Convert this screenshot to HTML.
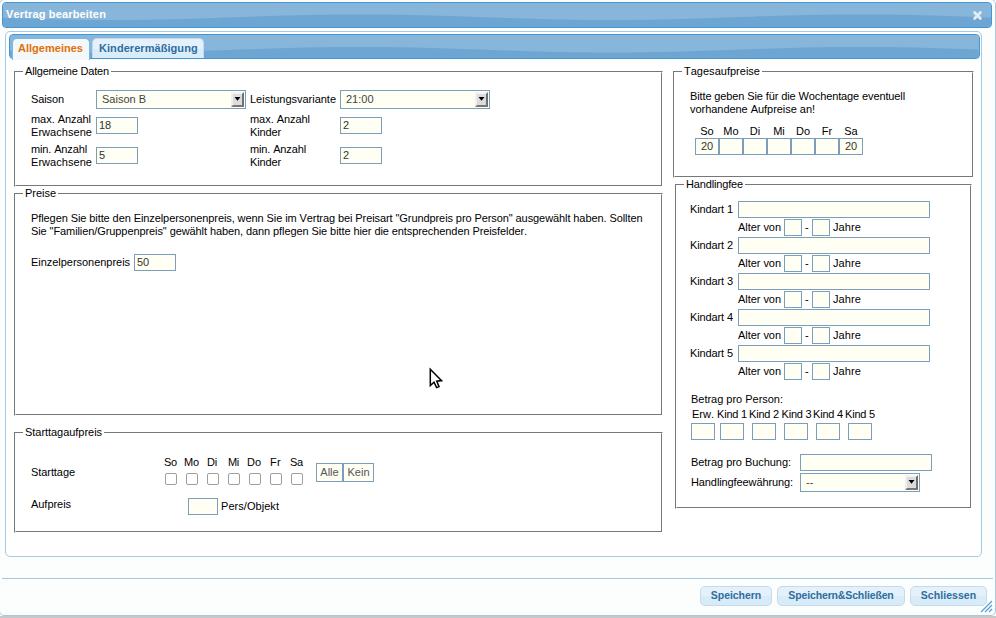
<!DOCTYPE html>
<html><head><meta charset="utf-8">
<style>
html,body{margin:0;padding:0;width:996px;height:618px;overflow:hidden;background:#fff;}
#root{position:relative;width:996px;height:618px;overflow:hidden;font-family:"Liberation Sans",sans-serif;font-size:11px;color:#222;font-kerning:none;}
.a{position:absolute;box-sizing:border-box;}
.t{position:absolute;white-space:nowrap;line-height:13px;font-size:11px;color:#000;}
.dlg{border:1px solid #a6c9e2;border-radius:5px;background:#fcfdfd;}
.hdr{border:1px solid #4297d7;border-radius:4px;background:linear-gradient(to bottom,#8ab8dd 0%,#86b4da 50%,#6fa7d4 62%,#6ca4d2 100%);}
.tabs{border:1px solid #a6c9e2;border-radius:5px;background:#fff;}
.fs{border:1px solid;border-color:#777 #fff #fff #777;}
.fsi{position:absolute;left:0;top:0;right:0;bottom:0;border:1px solid;border-color:#fff #777 #777 #fff;}
.inp{position:absolute;box-sizing:border-box;border:1px solid #7b9ebd;background:#fffff3;color:#333;font-size:11px;line-height:15px;padding-left:2px;white-space:nowrap;}
.inp.c{padding-left:0;text-align:center;}
.sel{position:absolute;box-sizing:border-box;border:1px solid #7b9ebd;background:#fffff3;color:#444;font-size:11px;line-height:17px;padding-left:5px;}
.arr{position:absolute;right:1px;top:1px;width:13px;height:15px;box-sizing:border-box;background:#dcdcdc;border-top:2px solid #f4f4f4;border-left:2px solid #f0f0f0;border-right:2px solid #707070;border-bottom:2px solid #787878;}
.cb{position:absolute;box-sizing:border-box;border:1px solid #a29f9a;border-radius:2px;background:#fff;}
.btn{position:absolute;box-sizing:border-box;border:1px solid #c5dbec;border-radius:5px;background:linear-gradient(to bottom,#e4f1fb 0%,#e4f1fb 50%,#d7ebf9 51%,#d7ebf9 100%);color:#2e6e9e;font-weight:bold;text-align:center;line-height:17px;}
.tab{position:absolute;box-sizing:border-box;border-top-left-radius:5px;border-top-right-radius:5px;}
.tab.act{border:1px solid #79b7e7;border-bottom:0;background:#f5f8f9;}
.tab.def{border:1px solid #c5dbec;border-bottom:0;background:linear-gradient(to bottom,#e4f1fb 0%,#e4f1fb 50%,#d9ecfa 51%,#d9ecfa 100%);}

</style></head>
<body><div id="root">
<div class="a dlg" style="left:-1px;top:-1px;width:997px;height:617px;"></div>
<div class="a hdr" style="left:2px;top:2px;width:990px;height:26px;overflow:hidden;"><svg style="position:absolute;left:0;top:0" width="988" height="24"><rect width="988" height="24" fill="#88b6db"/><path d="M0,24 L0,14.83 L4,14.96 L8,15.10 L12,15.23 L16,15.36 L20,15.49 L24,15.61 L28,15.73 L32,15.85 L36,15.96 L40,16.06 L44,16.17 L48,16.27 L52,16.36 L56,16.44 L60,16.53 L64,16.60 L68,16.67 L72,16.73 L76,16.79 L80,16.84 L84,16.88 L88,16.92 L92,16.95 L96,16.97 L100,16.99 L104,17.00 L108,17.00 L112,16.99 L116,16.98 L120,16.96 L124,16.94 L128,16.90 L132,16.86 L136,16.82 L140,16.76 L144,16.70 L148,16.64 L152,16.56 L156,16.49 L160,16.40 L164,16.31 L168,16.22 L172,16.12 L176,16.01 L180,15.90 L184,15.79 L188,15.67 L192,15.55 L196,15.42 L200,15.30 L204,15.17 L208,15.03 L212,14.90 L216,14.76 L220,14.62 L224,14.48 L228,14.34 L232,14.20 L236,14.06 L240,13.92 L244,13.78 L248,13.64 L252,13.50 L256,13.37 L260,13.23 L264,13.10 L268,12.98 L272,12.85 L276,12.73 L280,12.61 L284,12.50 L288,12.39 L292,12.28 L296,12.18 L300,12.09 L304,12.00 L308,11.91 L312,11.84 L316,11.76 L320,11.70 L324,11.64 L328,11.58 L332,11.54 L336,11.50 L340,11.46 L344,11.44 L348,11.42 L352,11.41 L356,11.40 L360,11.40 L364,11.41 L368,11.43 L372,11.45 L376,11.48 L380,11.52 L384,11.56 L388,11.61 L392,11.67 L396,11.73 L400,11.80 L404,11.87 L408,11.96 L412,12.04 L416,12.13 L420,12.23 L424,12.34 L428,12.44 L432,12.55 L436,12.67 L440,12.79 L444,12.91 L448,13.04 L452,13.17 L456,13.30 L460,13.44 L464,13.57 L468,13.71 L472,13.85 L476,13.99 L480,14.13 L484,14.27 L488,14.41 L492,14.55 L496,14.69 L500,14.83 L504,14.96 L508,15.10 L512,15.23 L516,15.36 L520,15.49 L524,15.61 L528,15.73 L532,15.85 L536,15.96 L540,16.06 L544,16.17 L548,16.27 L552,16.36 L556,16.44 L560,16.53 L564,16.60 L568,16.67 L572,16.73 L576,16.79 L580,16.84 L584,16.88 L588,16.92 L592,16.95 L596,16.97 L600,16.99 L604,17.00 L608,17.00 L612,16.99 L616,16.98 L620,16.96 L624,16.94 L628,16.90 L632,16.86 L636,16.82 L640,16.76 L644,16.70 L648,16.64 L652,16.56 L656,16.49 L660,16.40 L664,16.31 L668,16.22 L672,16.12 L676,16.01 L680,15.90 L684,15.79 L688,15.67 L692,15.55 L696,15.42 L700,15.30 L704,15.17 L708,15.03 L712,14.90 L716,14.76 L720,14.62 L724,14.48 L728,14.34 L732,14.20 L736,14.06 L740,13.92 L744,13.78 L748,13.64 L752,13.50 L756,13.37 L760,13.23 L764,13.10 L768,12.98 L772,12.85 L776,12.73 L780,12.61 L784,12.50 L788,12.39 L792,12.28 L796,12.18 L800,12.09 L804,12.00 L808,11.91 L812,11.84 L816,11.76 L820,11.70 L824,11.64 L828,11.58 L832,11.54 L836,11.50 L840,11.46 L844,11.44 L848,11.42 L852,11.41 L856,11.40 L860,11.40 L864,11.41 L868,11.43 L872,11.45 L876,11.48 L880,11.52 L884,11.56 L888,11.61 L892,11.67 L896,11.73 L900,11.80 L904,11.87 L908,11.96 L912,12.04 L916,12.13 L920,12.23 L924,12.34 L928,12.44 L932,12.55 L936,12.67 L940,12.79 L944,12.91 L948,13.04 L952,13.17 L956,13.30 L960,13.44 L964,13.57 L968,13.71 L972,13.85 L976,13.99 L980,14.13 L984,14.27 L988,14.41 L988,24 Z" fill="#6ea6d3"/></svg></div>
<div class="t" style="left:6px;top:8px;font-weight:bold;color:#fff;letter-spacing:0.156px;">Vertrag bearbeiten</div>
<svg class="a" style="left:972px;top:10px" width="11" height="11" viewBox="0 0 11 11"><path d="M2.6 2.6L8.4 8.4M8.4 2.6L2.6 8.4" stroke="#e3ecf6" stroke-width="2.8" stroke-linecap="round"/></svg>
<div class="a tabs" style="left:5px;top:31px;width:977px;height:526px;"></div>
<div class="a hdr" style="left:9px;top:34px;width:971px;height:25px;overflow:hidden;"><svg style="position:absolute;left:0;top:0" width="969" height="23"><rect width="969" height="23" fill="#88b6db"/><path d="M0,23 L0,15.57 L4,15.70 L8,15.83 L12,15.96 L16,16.08 L20,16.20 L24,16.32 L28,16.43 L32,16.54 L36,16.64 L40,16.74 L44,16.83 L48,16.92 L52,17.01 L56,17.08 L60,17.15 L64,17.22 L68,17.28 L72,17.33 L76,17.37 L80,17.41 L84,17.44 L88,17.47 L92,17.49 L96,17.50 L100,17.50 L104,17.50 L108,17.49 L112,17.47 L116,17.44 L120,17.41 L124,17.37 L128,17.33 L132,17.28 L136,17.22 L140,17.15 L144,17.08 L148,17.01 L152,16.92 L156,16.83 L160,16.74 L164,16.64 L168,16.54 L172,16.43 L176,16.32 L180,16.20 L184,16.08 L188,15.96 L192,15.83 L196,15.70 L200,15.57 L204,15.43 L208,15.29 L212,15.16 L216,15.02 L220,14.88 L224,14.74 L228,14.59 L232,14.45 L236,14.31 L240,14.18 L244,14.04 L248,13.90 L252,13.77 L256,13.64 L260,13.51 L264,13.38 L268,13.26 L272,13.14 L276,13.03 L280,12.92 L284,12.81 L288,12.71 L292,12.61 L296,12.52 L300,12.43 L304,12.35 L308,12.28 L312,12.21 L316,12.15 L320,12.10 L324,12.05 L328,12.01 L332,11.97 L336,11.94 L340,11.92 L344,11.91 L348,11.90 L352,11.90 L356,11.91 L360,11.92 L364,11.94 L368,11.97 L372,12.01 L376,12.05 L380,12.10 L384,12.15 L388,12.21 L392,12.28 L396,12.35 L400,12.43 L404,12.52 L408,12.61 L412,12.71 L416,12.81 L420,12.92 L424,13.03 L428,13.14 L432,13.26 L436,13.38 L440,13.51 L444,13.64 L448,13.77 L452,13.90 L456,14.04 L460,14.18 L464,14.31 L468,14.45 L472,14.59 L476,14.74 L480,14.88 L484,15.02 L488,15.16 L492,15.29 L496,15.43 L500,15.57 L504,15.70 L508,15.83 L512,15.96 L516,16.08 L520,16.20 L524,16.32 L528,16.43 L532,16.54 L536,16.64 L540,16.74 L544,16.83 L548,16.92 L552,17.01 L556,17.08 L560,17.15 L564,17.22 L568,17.28 L572,17.33 L576,17.37 L580,17.41 L584,17.44 L588,17.47 L592,17.49 L596,17.50 L600,17.50 L604,17.50 L608,17.49 L612,17.47 L616,17.44 L620,17.41 L624,17.37 L628,17.33 L632,17.28 L636,17.22 L640,17.15 L644,17.08 L648,17.01 L652,16.92 L656,16.83 L660,16.74 L664,16.64 L668,16.54 L672,16.43 L676,16.32 L680,16.20 L684,16.08 L688,15.96 L692,15.83 L696,15.70 L700,15.57 L704,15.43 L708,15.29 L712,15.16 L716,15.02 L720,14.88 L724,14.74 L728,14.59 L732,14.45 L736,14.31 L740,14.18 L744,14.04 L748,13.90 L752,13.77 L756,13.64 L760,13.51 L764,13.38 L768,13.26 L772,13.14 L776,13.03 L780,12.92 L784,12.81 L788,12.71 L792,12.61 L796,12.52 L800,12.43 L804,12.35 L808,12.28 L812,12.21 L816,12.15 L820,12.10 L824,12.05 L828,12.01 L832,11.97 L836,11.94 L840,11.92 L844,11.91 L848,11.90 L852,11.90 L856,11.91 L860,11.92 L864,11.94 L868,11.97 L872,12.01 L876,12.05 L880,12.10 L884,12.15 L888,12.21 L892,12.28 L896,12.35 L900,12.43 L904,12.52 L908,12.61 L912,12.71 L916,12.81 L920,12.92 L924,13.03 L928,13.14 L932,13.26 L936,13.38 L940,13.51 L944,13.64 L948,13.77 L952,13.90 L956,14.04 L960,14.18 L964,14.31 L968,14.45 L969,23 Z" fill="#6ea6d3"/></svg></div>
<div class="tab act" style="left:12px;top:38px;width:78px;height:22px;"></div>
<div class="t" style="left:18px;top:42px;font-weight:bold;color:#e17009;letter-spacing:0.018px;">Allgemeines</div>
<div class="tab def" style="left:92px;top:38px;width:112px;height:20px;"></div>
<div class="t" style="left:99px;top:42px;font-weight:bold;color:#2e6e9e;letter-spacing:0.057px;">Kinderermäßigung</div>
<div class="a fs" style="left:14px;top:71px;width:649px;height:116px;"><div class="fsi"></div></div>
<div class="a" style="left:23px;top:70px;width:88px;height:3px;background:#fff;"></div>
<div class="t" style="left:25px;top:65px;letter-spacing:-0.177px;">Allgemeine Daten</div>
<div class="t" style="left:31px;top:93px;letter-spacing:-0.106px;">Saison</div>
<div class="sel" style="left:96px;top:90px;width:150px;height:19px;">Saison B<div class="arr"><svg width="9" height="11" style="position:absolute;left:0;top:0"><path d="M1.5 3L7.5 3L4.5 6.8Z" fill="#000"/></svg></div></div>
<div class="t" style="left:250px;top:93px;letter-spacing:-0.013px;">Leistungsvariante</div>
<div class="sel" style="left:340px;top:90px;width:150px;height:19px;">21:00<div class="arr"><svg width="9" height="11" style="position:absolute;left:0;top:0"><path d="M1.5 3L7.5 3L4.5 6.8Z" fill="#000"/></svg></div></div>
<div class="t" style="left:31px;top:113px;letter-spacing:-0.048px;">max. Anzahl</div>
<div class="t" style="left:31px;top:126px;letter-spacing:0.047px;">Erwachsene</div>
<div class="inp" style="left:96px;top:117px;width:42px;height:17px;">18</div>
<div class="t" style="left:31px;top:143px;letter-spacing:-0.134px;">min. Anzahl</div>
<div class="t" style="left:31px;top:156px;letter-spacing:0.047px;">Erwachsene</div>
<div class="inp" style="left:96px;top:147px;width:42px;height:17px;">5</div>
<div class="t" style="left:250px;top:113px;letter-spacing:-0.048px;">max. Anzahl</div>
<div class="t" style="left:250px;top:126px;letter-spacing:-0.133px;">Kinder</div>
<div class="inp" style="left:340px;top:117px;width:42px;height:17px;">2</div>
<div class="t" style="left:250px;top:143px;letter-spacing:-0.134px;">min. Anzahl</div>
<div class="t" style="left:250px;top:156px;letter-spacing:-0.133px;">Kinder</div>
<div class="inp" style="left:340px;top:147px;width:42px;height:17px;">2</div>
<div class="a fs" style="left:14px;top:193px;width:649px;height:223px;"><div class="fsi"></div></div>
<div class="a" style="left:23px;top:192px;width:35px;height:3px;background:#fff;"></div>
<div class="t" style="left:25px;top:187px;letter-spacing:-0.030px;">Preise</div>
<div class="t" style="left:31px;top:212px;letter-spacing:-0.087px;">Pflegen Sie bitte den Einzelpersonenpreis, wenn Sie im Vertrag bei Preisart &quot;Grundpreis pro Person&quot; ausgewählt haben. Sollten</div>
<div class="t" style="left:31px;top:225px;letter-spacing:-0.088px;">Sie &quot;Familien/Gruppenpreis&quot; gewählt haben, dann pflegen Sie bitte hier die entsprechenden Preisfelder.</div>
<div class="t" style="left:31px;top:256px;letter-spacing:-0.035px;">Einzelpersonenpreis</div>
<div class="inp" style="left:134px;top:254px;width:42px;height:17px;">50</div>
<div class="a fs" style="left:14px;top:432px;width:649px;height:101px;"><div class="fsi"></div></div>
<div class="a" style="left:23px;top:431px;width:81px;height:3px;background:#fff;"></div>
<div class="t" style="left:25px;top:426px;letter-spacing:-0.041px;">Starttagaufpreis</div>
<div class="t" style="left:31px;top:466px;letter-spacing:-0.071px;">Starttage</div>
<div class="t" style="left:31px;top:498px;letter-spacing:-0.044px;">Aufpreis</div>
<div class="t" style="left:164px;top:456px;letter-spacing:-0.227px;">So</div>
<div class="t" style="left:184px;top:456px;letter-spacing:-0.140px;">Mo</div>
<div class="t" style="left:207px;top:456px;letter-spacing:-0.194px;">Di</div>
<div class="t" style="left:228px;top:456px;letter-spacing:-0.303px;">Mi</div>
<div class="t" style="left:247px;top:456px;letter-spacing:-0.031px;">Do</div>
<div class="t" style="left:270px;top:456px;letter-spacing:0.309px;">Fr</div>
<div class="t" style="left:290px;top:456px;letter-spacing:-0.227px;">Sa</div>
<div class="cb" style="left:165px;top:473px;width:12px;height:12px;"></div>
<div class="cb" style="left:186px;top:473px;width:12px;height:12px;"></div>
<div class="cb" style="left:207px;top:473px;width:12px;height:12px;"></div>
<div class="cb" style="left:228px;top:473px;width:12px;height:12px;"></div>
<div class="cb" style="left:249px;top:473px;width:12px;height:12px;"></div>
<div class="cb" style="left:270px;top:473px;width:12px;height:12px;"></div>
<div class="cb" style="left:291px;top:473px;width:12px;height:12px;"></div>
<div class="inp c" style="left:316px;top:463px;width:27px;height:19px;line-height:17px;color:#555;">Alle</div>
<div class="inp c" style="left:343px;top:463px;width:31px;height:19px;line-height:17px;color:#555;">Kein</div>
<div class="inp" style="left:188px;top:498px;width:30px;height:17px;"></div>
<div class="t" style="left:221px;top:500px;letter-spacing:0.049px;">Pers/Objekt</div>
<div class="a fs" style="left:673px;top:71px;width:301px;height:107px;"><div class="fsi"></div></div>
<div class="a" style="left:682px;top:70px;width:80px;height:3px;background:#fff;"></div>
<div class="t" style="left:684px;top:65px;letter-spacing:0.013px;">Tagesaufpreise</div>
<div class="t" style="left:690px;top:90px;letter-spacing:-0.117px;">Bitte geben Sie für die Wochentage eventuell</div>
<div class="t" style="left:690px;top:103px;letter-spacing:-0.041px;">vorhandene Aufpreise an!</div>
<div class="t" style="left:695px;top:125px;width:24px;text-align:center;">So</div>
<div class="inp c" style="left:695px;top:138px;width:24px;height:17px;">20</div>
<div class="t" style="left:719px;top:125px;width:24px;text-align:center;">Mo</div>
<div class="inp c" style="left:719px;top:138px;width:24px;height:17px;"></div>
<div class="t" style="left:743px;top:125px;width:24px;text-align:center;">Di</div>
<div class="inp c" style="left:743px;top:138px;width:24px;height:17px;"></div>
<div class="t" style="left:767px;top:125px;width:24px;text-align:center;">Mi</div>
<div class="inp c" style="left:767px;top:138px;width:24px;height:17px;"></div>
<div class="t" style="left:791px;top:125px;width:24px;text-align:center;">Do</div>
<div class="inp c" style="left:791px;top:138px;width:24px;height:17px;"></div>
<div class="t" style="left:815px;top:125px;width:24px;text-align:center;">Fr</div>
<div class="inp c" style="left:815px;top:138px;width:24px;height:17px;"></div>
<div class="t" style="left:839px;top:125px;width:24px;text-align:center;">Sa</div>
<div class="inp c" style="left:839px;top:138px;width:24px;height:17px;">20</div>
<div class="a fs" style="left:675px;top:184px;width:297px;height:325px;"><div class="fsi"></div></div>
<div class="a" style="left:684px;top:183px;width:61px;height:3px;background:#fff;"></div>
<div class="t" style="left:686px;top:178px;letter-spacing:-0.156px;">Handlingfee</div>
<div class="t" style="left:690px;top:203px;letter-spacing:-0.114px;">Kindart 1</div>
<div class="inp" style="left:738px;top:201px;width:192px;height:17px;"></div>
<div class="t" style="left:738px;top:221px;letter-spacing:-0.045px;">Alter von</div>
<div class="inp" style="left:784px;top:219px;width:18px;height:17px;"></div>
<div class="t" style="left:805px;top:221px;">-</div>
<div class="inp" style="left:812px;top:219px;width:18px;height:17px;"></div>
<div class="t" style="left:833px;top:221px;letter-spacing:0.097px;">Jahre</div>
<div class="t" style="left:690px;top:239px;letter-spacing:-0.114px;">Kindart 2</div>
<div class="inp" style="left:738px;top:237px;width:192px;height:17px;"></div>
<div class="t" style="left:738px;top:257px;letter-spacing:-0.045px;">Alter von</div>
<div class="inp" style="left:784px;top:255px;width:18px;height:17px;"></div>
<div class="t" style="left:805px;top:257px;">-</div>
<div class="inp" style="left:812px;top:255px;width:18px;height:17px;"></div>
<div class="t" style="left:833px;top:257px;letter-spacing:0.097px;">Jahre</div>
<div class="t" style="left:690px;top:275px;letter-spacing:-0.114px;">Kindart 3</div>
<div class="inp" style="left:738px;top:273px;width:192px;height:17px;"></div>
<div class="t" style="left:738px;top:293px;letter-spacing:-0.045px;">Alter von</div>
<div class="inp" style="left:784px;top:291px;width:18px;height:17px;"></div>
<div class="t" style="left:805px;top:293px;">-</div>
<div class="inp" style="left:812px;top:291px;width:18px;height:17px;"></div>
<div class="t" style="left:833px;top:293px;letter-spacing:0.097px;">Jahre</div>
<div class="t" style="left:690px;top:311px;letter-spacing:-0.114px;">Kindart 4</div>
<div class="inp" style="left:738px;top:309px;width:192px;height:17px;"></div>
<div class="t" style="left:738px;top:329px;letter-spacing:-0.045px;">Alter von</div>
<div class="inp" style="left:784px;top:327px;width:18px;height:17px;"></div>
<div class="t" style="left:805px;top:329px;">-</div>
<div class="inp" style="left:812px;top:327px;width:18px;height:17px;"></div>
<div class="t" style="left:833px;top:329px;letter-spacing:0.097px;">Jahre</div>
<div class="t" style="left:690px;top:347px;letter-spacing:-0.114px;">Kindart 5</div>
<div class="inp" style="left:738px;top:345px;width:192px;height:17px;"></div>
<div class="t" style="left:738px;top:365px;letter-spacing:-0.045px;">Alter von</div>
<div class="inp" style="left:784px;top:363px;width:18px;height:17px;"></div>
<div class="t" style="left:805px;top:365px;">-</div>
<div class="inp" style="left:812px;top:363px;width:18px;height:17px;"></div>
<div class="t" style="left:833px;top:365px;letter-spacing:0.097px;">Jahre</div>
<div class="t" style="left:691px;top:393px;letter-spacing:-0.018px;">Betrag pro Person:</div>
<div class="t" style="left:692px;top:408px;">Erw.</div>
<div class="t" style="left:717px;top:408px;letter-spacing:-0.198px;">Kind 1</div>
<div class="t" style="left:749px;top:408px;letter-spacing:-0.198px;">Kind 2</div>
<div class="t" style="left:781.5px;top:408px;letter-spacing:-0.198px;">Kind 3</div>
<div class="t" style="left:813px;top:408px;letter-spacing:-0.198px;">Kind 4</div>
<div class="t" style="left:845px;top:408px;letter-spacing:-0.198px;">Kind 5</div>
<div class="inp" style="left:691px;top:423px;width:24px;height:17px;"></div>
<div class="inp" style="left:720px;top:423px;width:24px;height:17px;"></div>
<div class="inp" style="left:752px;top:423px;width:24px;height:17px;"></div>
<div class="inp" style="left:784px;top:423px;width:24px;height:17px;"></div>
<div class="inp" style="left:816px;top:423px;width:24px;height:17px;"></div>
<div class="inp" style="left:848px;top:423px;width:24px;height:17px;"></div>
<div class="t" style="left:691px;top:456px;letter-spacing:-0.047px;">Betrag pro Buchung:</div>
<div class="inp" style="left:800px;top:454px;width:132px;height:17px;"></div>
<div class="t" style="left:691px;top:476px;letter-spacing:-0.103px;">Handlingfeewährung:</div>
<div class="sel" style="left:800px;top:473px;width:120px;height:19px;">--<div class="arr"><svg width="9" height="11" style="position:absolute;left:0;top:0"><path d="M1.5 3L7.5 3L4.5 6.8Z" fill="#000"/></svg></div></div>
<div class="a" style="left:2px;top:578px;width:991px;height:1px;background:#a6c9e2;"></div>
<div class="btn" style="left:700px;top:586px;width:72px;height:20px;font-size:10.5px;letter-spacing:-0.05px;">Speichern</div>
<div class="btn" style="left:777px;top:586px;width:128px;height:20px;font-size:10.5px;letter-spacing:-0.14px;">Speichern&amp;Schließen</div>
<div class="btn" style="left:910px;top:586px;width:77px;height:20px;font-size:10.5px;letter-spacing:0.05px;">Schliessen</div>
<svg class="a" style="left:980px;top:600px" width="13" height="13" viewBox="0 0 13 13"><path d="M1 12L12 1M5 12L12 5M9 12L12 9" stroke="#5c9ccc" stroke-width="1.2"/></svg>
<div class="a" style="left:0px;top:616px;width:996px;height:2px;background:#c8c8c8;"></div>
<svg class="a" style="left:425px;top:365px" width="22" height="26" viewBox="0 0 22 26"><path d="M5.3 4.3L5.3 20.6L9 17.2L11.6 22.6L14 21.6L11.8 16.2L16.6 15.6Z" fill="#fff" stroke="#000" stroke-width="1.5" stroke-linejoin="miter"/></svg>
</div>
</body></html>
